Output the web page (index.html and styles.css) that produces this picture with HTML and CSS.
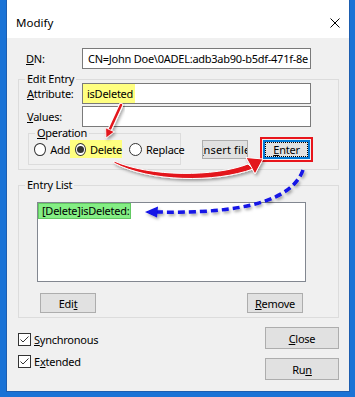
FILE: index.html
```html
<!DOCTYPE html>
<html lang="en">
<head>
  <meta charset="UTF-8">
  <title>Modify</title>
  <link rel="stylesheet" href="styles.css">
</head>
<body>
  <div class="window">
    <div class="titlebar">
      <span class="title">Modify</span>
      <svg class="close" width="10" height="10" viewBox="0 0 10 10"><path d="M0.5 0.5L9.5 9.5M9.5 0.5L0.5 9.5" stroke="#000" stroke-width="1"/></svg>
    </div>

    <div class="client">
      <div class="row dn-row">
        <span class="lbl"><u>D</u>N:</span>
        <div class="field">CN=John Doe\0ADEL:adb3ab90-b5df-471f-8e</div>
      </div>

      <fieldset class="group edit-group">
        <legend>Edit Entry</legend>
        <div class="row attr-row">
          <span class="lbl"><u>A</u>ttribute:</span>
          <div class="field attr-field"><span class="hl">isDeleted</span></div>
        </div>
        <div class="row values-row">
          <span class="lbl"><u>V</u>alues:</span>
          <div class="field"></div>
        </div>

        <div class="op-row">
          <fieldset class="group op-group">
            <legend><u>O</u>peration</legend>
            <div class="radios">
              <span class="radio-item add"><span class="radio"></span><span>Add</span></span>
              <span class="radio-item hl-radio"><span class="radio checked"></span><span>Delete</span></span>
              <span class="radio-item replace"><span class="radio"></span><span>Replace</span></span>
            </div>
          </fieldset>
          <button class="btn insert"><span class="insert-text"><u>I</u>nsert file</span></button>
          <div class="mark">
            <button class="btn enter"><span class="focus"><span><u>E</u>nter</span></span></button>
          </div>
        </div>
      </fieldset>

      <fieldset class="group list-group">
        <legend>Entry List</legend>
        <div class="listbox">
          <div class="item">[Delete]isDeleted:</div>
        </div>
        <div class="list-buttons">
          <button class="btn small"><span>Edi<u>t</u></span></button>
          <button class="btn small"><span><u>R</u>emove</span></button>
        </div>
      </fieldset>

      <div class="bottom">
        <div class="checks">
          <span class="check-item"><span class="checkbox"><svg width="11" height="11" viewBox="0 0 11 11"><path d="M1.5 5.5L4 8L9.5 2.5" stroke="#333" stroke-width="1" fill="none"/></svg></span><span><u>S</u>ynchronous</span></span>
          <span class="check-item"><span class="checkbox"><svg width="11" height="11" viewBox="0 0 11 11"><path d="M1.5 5.5L4 8L9.5 2.5" stroke="#333" stroke-width="1" fill="none"/></svg></span><span>E<u>x</u>tended</span></span>
        </div>
        <div class="actions">
          <button class="btn wide"><span><u>C</u>lose</span></button>
          <button class="btn wide"><span>Ru<u>n</u></span></button>
        </div>
      </div>
    </div>
  </div>

  <svg class="annot" width="355" height="397" viewBox="0 0 355 397">
    <defs>
      <filter id="shadow" x="-20%" y="-40%" width="140%" height="180%">
        <feDropShadow dx="1.5" dy="2" stdDeviation="1.4" flood-color="#000" flood-opacity="0.35"/>
      </filter>
    </defs>
    <!-- attribute -> delete -->
    <g filter="url(#shadow)">
      <path d="M121 105 L110 129" stroke="#fff" stroke-width="4.5" stroke-linecap="round" fill="none"/>
      <path d="M121 105 L110 129" stroke="#e3141b" stroke-width="2.5" stroke-linecap="round" fill="none"/>
      <polygon points="106,138 114.2,131.8 105.6,127.8" fill="#e3141b" stroke="#fff" stroke-width="0.8"/>
    </g>
    <!-- delete -> enter -->
    <g filter="url(#shadow)">
      <path d="M114 161 C150 177 215 177 248 164 L253 169 C215 183 150 182 114 163 Z" fill="#e3141b" stroke="#fff" stroke-width="1"/>
      <polygon points="263,159 255,174 246,157.5" fill="#e3141b" stroke="#fff" stroke-width="1"/>
    </g>
    <!-- enter -> entry list -->
    <g filter="url(#shadow)">
      <path d="M303 170 C292 200 245 214 157 212" stroke="#1212e6" stroke-width="3.5" stroke-dasharray="7 4" fill="none"/>
      <polygon points="145,212 158,206.5 157,217.5" fill="#1212e6"/>
    </g>
  </svg>
</body>
</html>
```

FILE: styles.css
```css
* {
  box-sizing: border-box;
}

body {
  margin: 0;
  width: 355px;
  height: 397px;
  overflow: hidden;
  background: #1a73d6;
  font-family: "Noto Sans", sans-serif;
  font-size: 11px;
  letter-spacing: -0.25px;
  color: #000;
}

.window {
  margin-left: 6px;
  width: 344px;
  height: 392px;
  border: 1px solid #1d5eb0;
  border-top: 0;
  background: #f0f0f0;
}

.titlebar {
  height: 38px;
  background: #fff;
  display: flex;
  align-items: center;
  justify-content: space-between;
  padding: 7px 9px 0 9px;
}

.title {
  font-size: 11.5px;
  letter-spacing: 0;
}

.client {
  display: flex;
  flex-direction: column;
  align-items: flex-start;
}

.row {
  display: flex;
  align-items: center;
  height: 21px;
}

.dn-row {
  margin: 10px 0 0 19px;
}

.dn-row .lbl {
  width: 56px;
}

.lbl {
  width: 55px;
}

.field {
  width: 229px;
  height: 21px;
  border: 1px solid #7a7a7a;
  background: #fff;
  padding-left: 5px;
  line-height: 19px;
  white-space: nowrap;
  overflow: hidden;
}

.attr-field {
  padding-left: 0;
}

.hl {
  display: inline-block;
  height: 19px;
  width: 52px;
  padding-left: 4px;
  background: #ffff80;
}

.group {
  margin: 0;
  padding: 0;
  min-width: 0;
  border: 1px solid #dcdcdc;
}

.group legend {
  padding: 0 2px;
  margin-left: -2px;
  line-height: 14px;
}

.edit-group {
  margin: 3px 0 0 11px;
  width: 321px;
  padding: 0 0 4px 8px;
}

.attr-row {
  margin-top: -3px;
}

.values-row {
  margin-top: 2px;
}

.op-row {
  display: flex;
  align-items: flex-start;
  margin-top: -1px;
}

.op-group {
  margin-left: 1px;
  width: 153px;
  padding: 0 0 6px 5px;
}

.op-group legend {
  margin-left: 1px;
}

.radios {
  display: flex;
  align-items: center;
  height: 18px;
  white-space: nowrap;
}

.radio-item {
  display: flex;
  align-items: center;
  gap: 4px;
}

.add {
  width: 36px;
}

.hl-radio {
  width: 52px;
  height: 18px;
  padding-left: 5px;
  background: #ffff80;
}

.replace {
  margin-left: 7px;
}

.radio {
  width: 13px;
  height: 13px;
  border: 1px solid #333;
  border-radius: 50%;
  background: #fff;
  display: flex;
  align-items: center;
  justify-content: center;
}

.radio.checked::after {
  content: "";
  width: 7px;
  height: 7px;
  border-radius: 50%;
  background: #333;
}

.btn {
  font: inherit;
  letter-spacing: inherit;
  color: #000;
  background: #e1e1e1;
  border: 1px solid #adadad;
  padding: 0;
  white-space: nowrap;
  overflow: hidden;
  display: flex;
  align-items: center;
  justify-content: center;
}

.insert {
  margin: 14px 0 0 21px;
  width: 46px;
  height: 19px;
}

.insert-text {
  letter-spacing: 0.15px;
}

.mark {
  margin: 11px 0 0 12px;
  border: 2px solid #e8151b;
  padding: 1px;
}

.enter {
  width: 47px;
  height: 19px;
  border: 2px solid #0078d7;
  padding: 0;
}

.focus {
  width: 100%;
  height: 100%;
  border: 1px dotted #000;
  display: flex;
  align-items: center;
  justify-content: center;
}

.list-group {
  margin: 8px 0 0 11px;
  width: 321px;
  padding: 0 0 4px 8px;
}

.listbox {
  margin: 10px 0 0 10px;
  width: 269px;
  height: 80px;
  border: 1px solid #828790;
  background: #fff;
}

.item {
  width: 93px;
  height: 16px;
  line-height: 14px;
  padding-left: 3px;
  background: #84ee84;
  border: 1px solid #62c962;
  white-space: nowrap;
}

.list-buttons {
  display: flex;
  justify-content: space-between;
  margin: 11px 0 0 13px;
  width: 263px;
}

.small {
  width: 56px;
  height: 20px;
}

.bottom {
  display: flex;
  justify-content: space-between;
  width: 100%;
}

.checks {
  margin: 15px 0 0 11px;
  display: flex;
  flex-direction: column;
  gap: 9px;
}

.check-item {
  display: flex;
  align-items: center;
  gap: 3px;
  height: 13px;
}

.checkbox {
  width: 13px;
  height: 13px;
  border: 1px solid #333;
  background: #fff;
  display: flex;
}

.actions {
  margin: 9px 10px 0 0;
  display: flex;
  flex-direction: column;
  gap: 9px;
}

.wide {
  width: 74px;
  height: 22px;
}

.annot {
  position: absolute;
  top: 0;
  left: 0;
  pointer-events: none;
}
```
